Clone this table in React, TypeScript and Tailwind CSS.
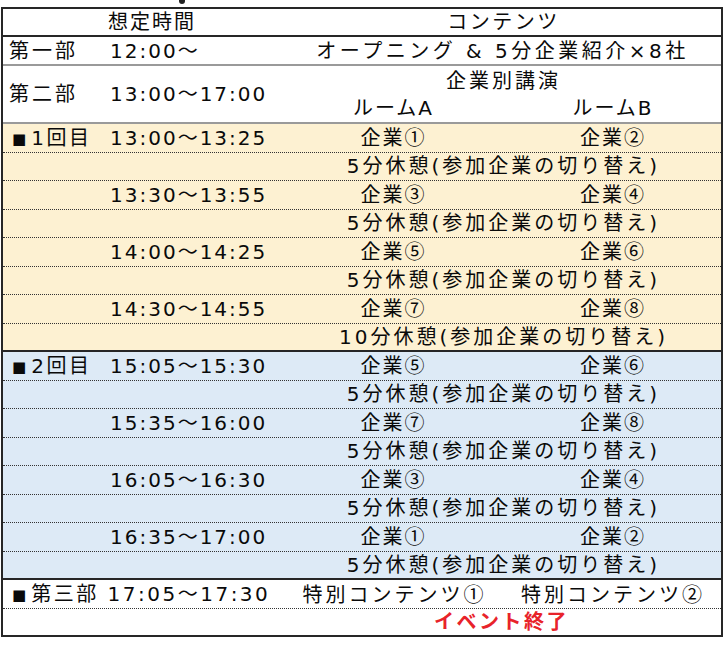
import React from 'react'

type Slot = { label?: string; time: string; a: string; b: string; rest: string }

const firstRound: Slot[] = [
  { label: '1回目', time: '13:00〜13:25', a: '企業①', b: '企業②', rest: '5分休憩(参加企業の切り替え)' },
  { time: '13:30〜13:55', a: '企業③', b: '企業④', rest: '5分休憩(参加企業の切り替え)' },
  { time: '14:00〜14:25', a: '企業⑤', b: '企業⑥', rest: '5分休憩(参加企業の切り替え)' },
  { time: '14:30〜14:55', a: '企業⑦', b: '企業⑧', rest: '10分休憩(参加企業の切り替え)' },
]

const secondRound: Slot[] = [
  { label: '2回目', time: '15:05〜15:30', a: '企業⑤', b: '企業⑥', rest: '5分休憩(参加企業の切り替え)' },
  { time: '15:35〜16:00', a: '企業⑦', b: '企業⑧', rest: '5分休憩(参加企業の切り替え)' },
  { time: '16:05〜16:30', a: '企業③', b: '企業④', rest: '5分休憩(参加企業の切り替え)' },
  { time: '16:35〜17:00', a: '企業①', b: '企業②', rest: '5分休憩(参加企業の切り替え)' },
]

const cols = 'grid grid-cols-[105px_182px_215px_1fr] items-center'

// circled numbers come from the CJK font so they get full width
function Jp({ text }: { text: string }) {
  const parts = text.split(/([①-⑳])/)
  return (
    <>
      {parts.map((p, i) =>
        /[①-⑳]/.test(p) ? (
          <span key={i} className="font-['Noto_Sans_CJK_JP',sans-serif]">
            {p}
          </span>
        ) : (
          <React.Fragment key={i}>{p}</React.Fragment>
        )
      )}
    </>
  )
}

function Square() {
  return <span className="text-[15px] tracking-[5px] align-[1px]">■</span>
}

function Round({ slots, bg }: { slots: Slot[]; bg: string }) {
  return (
    <div className={bg}>
      {slots.map((s, i) => {
        const last = i === slots.length - 1
        return (
          <React.Fragment key={i}>
            <div className={`${cols} h-[28.5px] border-b border-dotted border-[#333]`}>
              <div className="pl-[9px] tracking-[2.5px] whitespace-nowrap">
                {s.label && (
                  <>
                    <Square />
                    {s.label}
                  </>
                )}
              </div>
              <div className="pl-[2px] tracking-[2px]">{s.time}</div>
              <div className="text-center pr-[8px] tracking-[2px]">
                <Jp text={s.a} />
              </div>
              <div className="text-center tracking-[2px]">
                <Jp text={s.b} />
              </div>
            </div>
            <div
              className={`flex items-center h-[28.5px] ${
                last ? 'border-b-2 border-solid border-[#262626]' : 'border-b border-dotted border-[#333]'
              }`}
            >
              <div className="w-[287px]" />
              <div className="flex-1 text-center pr-[4px] tracking-[3px]">{s.rest}</div>
            </div>
          </React.Fragment>
        )
      })}
    </div>
  )
}

export default function App() {
  return (
    <div className="w-[724px] h-[645px] bg-white text-[20px] tracking-[2px] text-[#0a0a0a] leading-none relative font-['DejaVu_Sans','Noto_Sans_CJK_JP',sans-serif]">
      {/* small mark above the table */}
      <div className="absolute left-[179px] top-0 w-[6px] h-[4px] bg-[#222] rounded-b-full" />

      <div className="ml-[1px] pt-[7px] w-[722px]">
        <div className="border-2 border-[#262626]">
          {/* header */}
          <div className={`${cols} h-[28px] border-b-2 border-[#262626]`}>
            <div />
            <div>想定時間</div>
            <div className="col-span-2 text-center pr-[4px] tracking-[2.5px]">コンテンツ</div>
          </div>

          {/* 第一部 */}
          <div className={`${cols} h-[29px] border-b-2 border-[#9a9a9a]`}>
            <div className="pl-[6px] tracking-[3px]">第一部</div>
            <div className="pl-[2px]">12:00〜</div>
            <div className="col-span-2 text-center pr-[6px] tracking-[3.5px] whitespace-nowrap">
              オープニング &amp; 5分企業紹介×8社
            </div>
          </div>

          {/* 第二部 */}
          <div className={`${cols} h-[58px] border-b-2 border-[#9a9a9a]`}>
            <div className="pl-[6px] tracking-[3px]">第二部</div>
            <div className="pl-[2px]">13:00〜17:00</div>
            <div className="col-span-2 flex flex-col gap-[7px]">
              <div className="text-center pr-[4px] tracking-[3px]">企業別講演</div>
              <div className="grid grid-cols-[215px_1fr]">
                <div className="text-center pr-[8px]">ルームA</div>
                <div className="text-center">ルームB</div>
              </div>
            </div>
          </div>

          <Round slots={firstRound} bg="bg-[#fdf1d2]" />
          <Round slots={secondRound} bg="bg-[#ddeaf6]" />

          {/* 第三部 */}
          <div className="flex items-center h-[29px] border-b border-dotted border-[#333]">
            <div className="pl-[9px] w-[287px] whitespace-nowrap tracking-[2.5px]">
              <Square />
              第三部 17:05〜17:30
            </div>
            <div className="w-[215px] text-center whitespace-nowrap tracking-[3px] pr-[6px]">
              <Jp text="特別コンテンツ①" />
            </div>
            <div className="flex-1 text-center whitespace-nowrap tracking-[3px]">
              <Jp text="特別コンテンツ②" />
            </div>
          </div>

          {/* 終了 */}
          <div className="flex items-center h-[26px]">
            <div className="w-[287px]" />
            <div className="flex-1 text-center pr-[8px] font-bold text-[#e8232a] tracking-[2.5px]">イベント終了</div>
          </div>
        </div>
      </div>
    </div>
  )
}
